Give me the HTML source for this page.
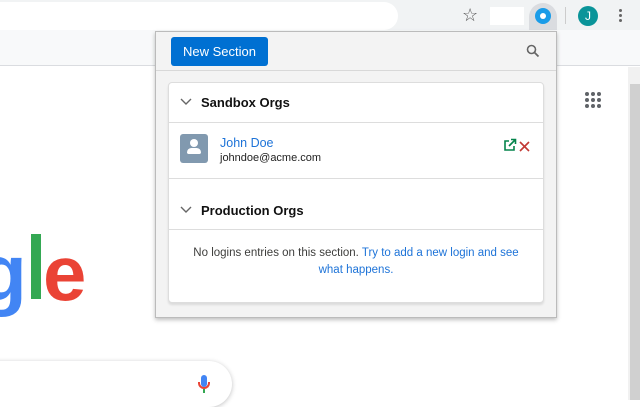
<!DOCTYPE html>
<html><head><style>
*{margin:0;padding:0;box-sizing:border-box}
body{width:640px;height:400px;overflow:hidden;position:relative;background:#fff;font-family:"Liberation Sans",sans-serif}
.abs{position:absolute}
</style></head><body>
<div class="abs" style="left:0;top:0;width:640px;height:30px;background:#f1f3f4"></div>
<div class="abs" style="left:-20px;top:2px;width:418px;height:28px;background:#fff;border-radius:14px"></div>
<div class="abs" style="left:462px;top:5px;font-size:18px;color:#555">☆</div>
<div class="abs" style="left:490px;top:7px;width:34px;height:18px;background:#fff"></div>
<div class="abs" style="left:529px;top:3px;width:28px;height:27px;background:#dadce0;border-radius:14px 14px 0 0"></div>
<div class="abs" style="left:535px;top:8px;width:16px;height:16px;border-radius:50%;background:#1a9ce8"></div>
<div class="abs" style="left:540px;top:13px;width:6px;height:6px;border-radius:50%;background:#fff"></div>
<div class="abs" style="left:565px;top:7px;width:1px;height:17px;background:#ccc"></div>
<div class="abs" style="left:578px;top:6px;width:20px;height:20px;border-radius:50%;background:#0a9499;color:#fff;font-size:12px;text-align:center;line-height:20px">J</div>
<div class="abs" style="left:619px;top:9px;width:3px;height:3px;background:#666;border-radius:50%;box-shadow:0 5px 0 #666,0 10px 0 #666"></div>
<div class="abs" style="left:0;top:30px;width:640px;height:36px;background:#f8f9fa;border-bottom:1px solid #dadce0"></div>
<div class="abs" style="left:628px;top:67px;width:12px;height:333px;background:#f1f1f1"></div>
<div class="abs" style="left:630px;top:84px;width:10px;height:316px;background:#d0d0d0"></div>
<div class="abs" style="left:585px;top:92px;width:4px;height:4px;background:#5f6368;border-radius:50%;box-shadow:6px 0 #5f6368,12px 0 #5f6368,0 6px #5f6368,6px 6px #5f6368,12px 6px #5f6368,0 12px #5f6368,6px 12px #5f6368,12px 12px #5f6368"></div>
<div class="abs" style="left:-22px;top:228px;font-size:80px;line-height:90px;color:#4285f4;font-weight:bold">g</div>
<div class="abs" style="left:31px;top:234px;width:10px;height:65px;background:#34a853"></div>
<div class="abs" style="left:43px;top:228px;font-size:78px;line-height:90px;color:#ea4335;font-weight:bold">e</div>
<div class="abs" style="left:-30px;top:361px;width:262px;height:46px;border-radius:23px;background:#fff;box-shadow:0 1px 5px rgba(32,33,36,.28)"></div>
<div class="abs" style="left:201px;top:375px;width:6px;height:12px;background:#4285f4;border-radius:3px"></div>
<div class="abs" style="left:198px;top:382px;width:12px;height:7px;border:2px solid #ea4335;border-top:none;border-radius:0 0 6px 6px"></div>
<div class="abs" style="left:203px;top:389px;width:2px;height:4px;background:#34a853"></div>

<div class="abs" style="left:155px;top:31px;width:402px;height:287px;background:#f3f3f3;border:1px solid #bbb;box-shadow:0 2px 4px rgba(0,0,0,.25)"></div>
<div class="abs" style="left:156px;top:70px;width:400px;height:1px;background:#d8d8d8"></div>
<div class="abs" style="left:171px;top:37px;width:97px;height:29px;background:#0070d2;border-radius:3px;color:#fff;font-size:13px;text-align:center;line-height:29px">New Section</div>
<svg class="abs" style="left:526px;top:44px" width="14" height="14"><circle cx="5.5" cy="5.5" r="4" fill="none" stroke="#666" stroke-width="1.6"/><path d="M8.5 8.5L12.5 12.5" stroke="#666" stroke-width="1.8"/></svg>
<div class="abs" style="left:168px;top:82px;width:376px;height:221px;background:#fff;border:1px solid #ddd;border-radius:4px;box-shadow:0 2px 2px rgba(0,0,0,.1)"></div>
<div class="abs" style="left:169px;top:122px;width:374px;height:1px;background:#ddd"></div>
<div class="abs" style="left:169px;top:178px;width:374px;height:1px;background:#ddd"></div>
<div class="abs" style="left:169px;top:229px;width:374px;height:1px;background:#ddd"></div>
<svg class="abs" style="left:180px;top:98px" width="12" height="8"><path d="M1 1L6 6L11 1" fill="none" stroke="#666" stroke-width="1.4"/></svg>
<div class="abs" style="left:201px;top:95px;font-size:13px;font-weight:bold;color:#111">Sandbox Orgs</div>
<svg class="abs" style="left:180px;top:206px" width="12" height="8"><path d="M1 1L6 6L11 1" fill="none" stroke="#666" stroke-width="1.4"/></svg>
<div class="abs" style="left:201px;top:203px;font-size:13px;font-weight:bold;color:#111">Production Orgs</div>
<div class="abs" style="left:180px;top:134px;width:28px;height:29px;background:#8199af;border-radius:3px"></div>
<div class="abs" style="left:190px;top:139px;width:8px;height:8px;background:#fff;border-radius:50%"></div>
<div class="abs" style="left:187px;top:148px;width:14px;height:6px;background:#fff;border-radius:5px 5px 2px 2px"></div>
<div class="abs" style="left:220px;top:136px;font-size:12.5px;color:#1d73d8">John Doe</div>
<div class="abs" style="left:220px;top:152px;font-size:11px;color:#222">johndoe@acme.com</div>
<svg class="abs" style="left:503px;top:138px" width="14" height="14"><path d="M6 3H2V12H11V8" fill="none" stroke="#04844b" stroke-width="1.6"/><path d="M6 8L12 2M8 1.5H12.5V6" fill="none" stroke="#04844b" stroke-width="1.6"/></svg>
<div class="abs" style="left:519px;top:139px"><svg width="11" height="11"><path d="M1 1L10 10M10 1L1 10" stroke="#c23934" stroke-width="1.6"/></svg></div>
<div class="abs" style="left:169px;top:245px;width:374px;text-align:center;font-size:11.5px;line-height:17px;color:#3e3e3c">No logins entries on this section. <span style="color:#1d73d8">Try to add a new login and see<br>what happens.</span></div>
</body></html>
